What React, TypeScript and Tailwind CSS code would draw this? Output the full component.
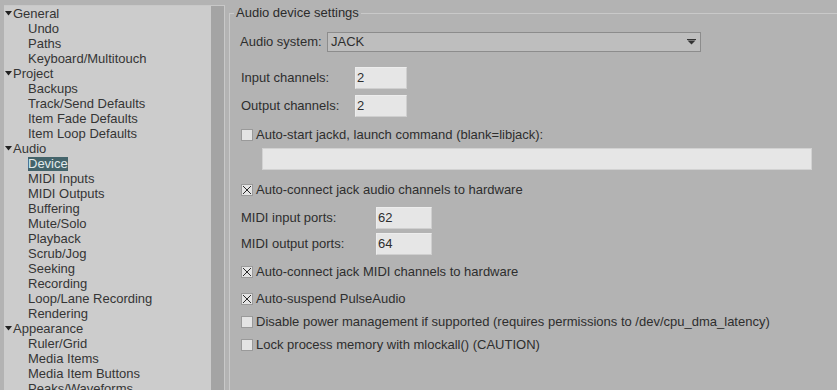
import React from 'react';

type TreeNode = { label: string; children: string[] };

const TREE: TreeNode[] = [
  { label: 'General', children: ['Undo', 'Paths', 'Keyboard/Multitouch'] },
  { label: 'Project', children: ['Backups', 'Track/Send Defaults', 'Item Fade Defaults', 'Item Loop Defaults'] },
  {
    label: 'Audio',
    children: [
      'Device',
      'MIDI Inputs',
      'MIDI Outputs',
      'Buffering',
      'Mute/Solo',
      'Playback',
      'Scrub/Jog',
      'Seeking',
      'Recording',
      'Loop/Lane Recording',
      'Rendering',
    ],
  },
  { label: 'Appearance', children: ['Ruler/Grid', 'Media Items', 'Media Item Buttons', 'Peaks/Waveforms'] },
];

const Expander = () => (
  <svg width="8" height="5" viewBox="0 0 8 5" className="ml-[1px] shrink-0">
    <path d="M0 0 H7 L3.5 4.5 Z" fill="#222" />
  </svg>
);

const Checkbox: React.FC<{ checked?: boolean }> = ({ checked }) => (
  <span className="w-[12px] h-[12px] shrink-0 bg-[#e4e4e4] border border-[#9a9a9a] flex items-center justify-center">
    {checked && (
      <svg width="10" height="10" viewBox="0 0 10 10">
        <path d="M1 1 L9 9 M9 1 L1 9" stroke="#2a2a2a" strokeWidth="1" />
      </svg>
    )}
  </span>
);

const CheckRow: React.FC<{ checked?: boolean; label: string; className?: string }> = ({ checked, label, className }) => (
  <div className={`flex items-center gap-[3px] h-[16px] pl-[11px] ${className ?? ''}`}>
    <Checkbox checked={checked} />
    <span className="whitespace-nowrap">{label}</span>
  </div>
);

const NumberField: React.FC<{ label: string; value: string; labelWidth: string; boxWidth: string; className?: string }> = ({
  label,
  value,
  labelWidth,
  boxWidth,
  className,
}) => (
  <div className={`flex items-center h-[22px] pl-[11px] ${className ?? ''}`}>
    <span className={`${labelWidth} shrink-0 whitespace-nowrap`}>{label}</span>
    <div className={`${boxWidth} h-[22px] bg-[#e6e6e6] border-t border-l border-[#ededed] border-b border-r border-b-[#cfcfcf] border-r-[#cfcfcf] pl-[1px] leading-[20px]`}>
      {value}
    </div>
  </div>
);

export default function App() {
  return (
    <div className="w-[837px] h-[390px] overflow-hidden bg-[#b3b3b3] flex font-['Liberation_Sans',Arial,sans-serif] text-[13px] text-[#2e2e2e]">
      {/* Sidebar tree */}
      <div className="ml-[4px] mt-[5px] w-[221px] h-[400px] flex border-t border-r border-[#c8c8c8] shrink-0">
        <div className="w-[207px] bg-[#cccccc] text-[#353535]">
          {TREE.map((node) => (
            <div key={node.label}>
              <div className="flex items-center h-[15px] leading-[15px]">
                <Expander />
                <span>{node.label}</span>
              </div>
              {node.children.map((child) => (
                <div key={child} className="h-[15px] leading-[15px] pl-[24px] whitespace-nowrap">
                  {child === 'Device' ? (
                    <span className="bg-[#44646b] text-[#e2eaec] inline-block leading-[14px]">{child}</span>
                  ) : (
                    child
                  )}
                </div>
              ))}
            </div>
          ))}
        </div>
        <div className="w-[13px] bg-[#a4a4a4]" />
      </div>

      {/* Settings panel */}
      <fieldset className="ml-[4px] mt-[5px] flex-1 border-t border-l border-[#c9c9c9] min-w-0">
        <legend className="ml-[4px] px-[2px] leading-[16px] text-[#2b2b2b]">Audio device settings</legend>

        <div className="flex items-center h-[20px] mt-[11px] pl-[10px]">
          <span className="w-[87px] shrink-0 whitespace-nowrap">Audio system:</span>
          <div className="w-[374px] h-[20px] bg-[#bebebe] border border-[#8c8c8c] flex items-center justify-between pl-[3px] pr-[4px]">
            <span>JACK</span>
            <svg width="9" height="6" viewBox="0 0 9 6">
              <path d="M0 0 H9 V1 H0 Z M0.5 1.5 H8.5 L4.5 5.5 Z" fill="#333" />
            </svg>
          </div>
        </div>

        <NumberField label="Input channels:" value="2" labelWidth="w-[114px]" boxWidth="w-[52px]" className="mt-[15px]" />
        <NumberField label="Output channels:" value="2" labelWidth="w-[114px]" boxWidth="w-[52px]" className="mt-[6px]" />

        <CheckRow label="Auto-start jackd, launch command (blank=libjack):" className="mt-[10px]" />
        <div className="ml-[32px] mt-[5px] w-[550px] h-[22px] bg-[#e6e6e6] border border-[#d2d2d2]" />

        <CheckRow checked label="Auto-connect jack audio channels to hardware" className="mt-[12px]" />

        <NumberField label="MIDI input ports:" value="62" labelWidth="w-[135px]" boxWidth="w-[56px]" className="mt-[9px]" />
        <NumberField label="MIDI output ports:" value="64" labelWidth="w-[135px]" boxWidth="w-[56px]" className="mt-[4px]" />

        <CheckRow checked label="Auto-connect jack MIDI channels to hardware" className="mt-[9px]" />
        <CheckRow checked label="Auto-suspend PulseAudio" className="mt-[11px]" />
        <CheckRow
          label="Disable power management if supported (requires permissions to /dev/cpu_dma_latency)"
          className="mt-[7px]"
        />
        <CheckRow label="Lock process memory with mlockall() (CAUTION)" className="mt-[7px]" />
      </fieldset>
    </div>
  );
}
